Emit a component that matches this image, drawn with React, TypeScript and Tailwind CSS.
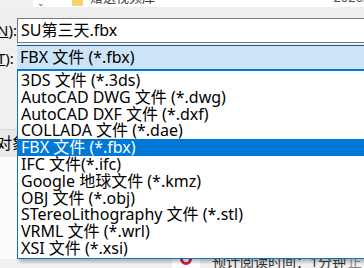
const FONT = '"Noto Sans", "Noto Sans CJK SC", sans-serif';

const TYPES = [
  '3DS 文件 (*.3ds)',
  'AutoCAD DWG 文件 (*.dwg)',
  'AutoCAD DXF 文件 (*.dxf)',
  'COLLADA 文件 (*.dae)',
  'FBX 文件 (*.fbx)',
  'IFC 文件(*.ifc)',
  'Google 地球文件 (*.kmz)',
  'OBJ 文件 (*.obj)',
  'STereoLithography 文件 (*.stl)',
  'VRML 文件 (*.wrl)',
  'XSI 文件 (*.xsi)',
];
const SELECTED = 'FBX 文件 (*.fbx)';

export default function App() {
  return (
    <div
      className="relative h-[268px] w-[364px] overflow-hidden bg-[#f0f0f0] text-[16px] text-black"
      style={{ fontFamily: FONT }}
    >
      {/* file list row peeking at the top */}
      <div className="flex h-[7px] overflow-hidden">
        <div className="w-[33px] bg-[#f0f0f0]" />
        <div className="flex flex-1 bg-white">
          <div className="flex w-[15px] items-start justify-center text-[9px] leading-[6px] text-[#555]">⌄</div>
          <div className="ml-[24px] h-[6px] w-[11px] rounded-b-[1px] bg-[#f4d36c]" />
          <div className="ml-[7px] -mt-[9px] text-[13px] leading-[13px] text-[#333]">赠送视频库</div>
          <div className="ml-auto mr-[-4px] -mt-[9px] text-[13px] leading-[13px] text-[#555]">2020/</div>
        </div>
      </div>
      <div className="h-[11px] bg-[#eeeeee]" />

      {/* file name */}
      <div className="flex h-[25px] items-center">
        <div className="w-[17px] shrink-0 text-[15px] leading-[25px]">
          <span className="-ml-[3px] underline">N</span>):
        </div>
        <div className="flex h-[25px] flex-1 items-center border border-r-0 border-[#7a7a7a] bg-white pl-[3px] leading-[23px]">
          SU第三天.fbx
        </div>
      </div>

      {/* save as type */}
      <div className="mt-[2px] flex h-[26px] items-center">
        <div className="w-[17px] shrink-0 text-[15px] leading-[26px]">
          <span className="-ml-[3px] underline">T</span>):
        </div>
        <div className="flex h-[26px] flex-1 items-center border-t border-b-2 border-t-[#1a5c9e] border-b-[#0078d7] bg-[#cce4f7] pl-[3px] leading-[23px]">
          {SELECTED}
        </div>
      </div>

      {/* content behind the list */}
      <div className="h-[58px] bg-[#f0f0f0]" />
      <div className="flex h-[28px] items-center border-t border-[#d9d9d9] bg-[#e9e9e9]">
        <span className="-ml-[4px] leading-[27px]">对象</span>
      </div>
      <div className="h-[102px] bg-[#fbfbfb]" />
      <div className="flex h-[12px] items-start bg-[#f0f0f0]">
        <div className="ml-[172px] h-[12px] w-[28px] bg-white">
          <div className="mx-auto mt-[-6px] h-[12px] w-[12px] rounded-full border-[3px] border-[#d6203a]" />
        </div>
        <div className="ml-[12px] -mt-[4px] text-[14px] leading-[14px] text-[#333]">预计阅读时间：1分钟</div>
        <div className="ml-auto mr-[2px] -mt-[4px] text-[14px] leading-[14px] text-[#888]">正</div>
      </div>

      {/* open dropdown list */}
      <div className="absolute left-[17px] top-[70px] w-[360px] border border-[#0078d7] bg-white py-[1px] shadow-[2px_3px_3px_rgba(0,0,0,0.25)]">
        {TYPES.map((t) => (
          <div
            key={t}
            className={`h-[16.8px] whitespace-nowrap pl-[3px] leading-[16.8px] ${
              t === SELECTED ? 'bg-[#0078d7] text-white' : 'text-black'
            }`}
          >
            {t}
          </div>
        ))}
      </div>
    </div>
  );
}
